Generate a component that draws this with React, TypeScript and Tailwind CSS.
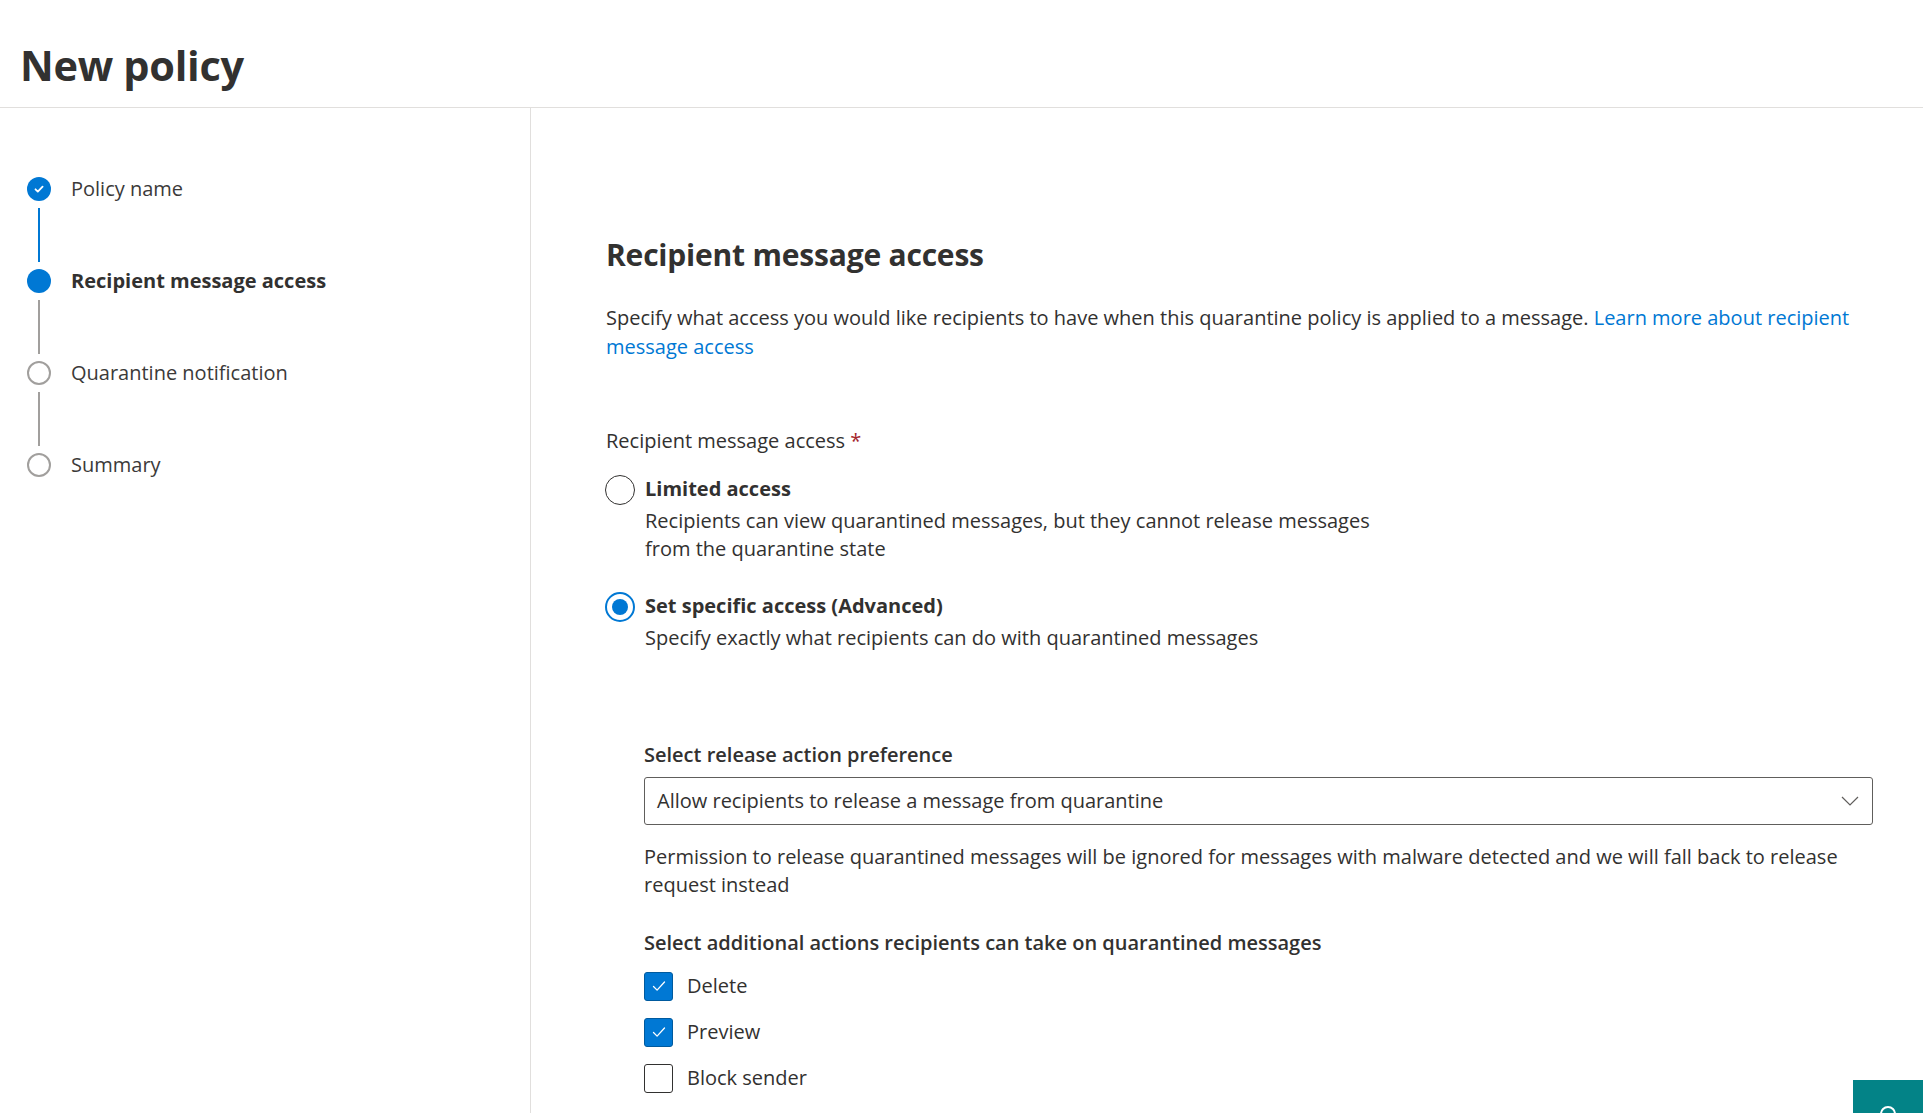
import React, { useState } from "react";

const steps = [
  { label: "Policy name", state: "done" },
  { label: "Recipient message access", state: "current" },
  { label: "Quarantine notification", state: "todo" },
  { label: "Summary", state: "todo" },
];

const StepDot = ({ state }: { state: string }) => {
  if (state === "done") {
    return (
      <span className="flex h-[24px] w-[24px] items-center justify-center rounded-full bg-[#0078d4]">
        <svg width="12" height="12" viewBox="0 0 12 12" fill="none">
          <path d="M2.5 6.3l2.3 2.3L9.6 3.6" stroke="white" strokeWidth="1.8" strokeLinecap="round" strokeLinejoin="round" />
        </svg>
      </span>
    );
  }
  if (state === "current") {
    return <span className="block h-[24px] w-[24px] rounded-full bg-[#0078d4]" />;
  }
  return <span className="block h-[24px] w-[24px] rounded-full border-2 border-[#a19f9d] bg-white" />;
};

const Radio = ({ checked }: { checked: boolean }) => (
  <span
    className={`flex h-[30px] w-[30px] shrink-0 items-center justify-center rounded-full bg-white ${
      checked ? "border-2 border-[#0078d4]" : "border-[1.5px] border-[#323130]"
    }`}
  >
    {checked && <span className="block h-[16px] w-[16px] rounded-full bg-[#0078d4]" />}
  </span>
);

const Checkbox = ({ checked }: { checked: boolean }) => (
  <span
    className={`flex h-[29px] w-[29px] shrink-0 items-center justify-center rounded-[3px] ${
      checked ? "border border-[#005a9e] bg-[#0078d4]" : "border-[1.5px] border-[#323130] bg-white"
    }`}
  >
    {checked && (
      <svg width="18" height="18" viewBox="0 0 18 18" fill="none">
        <path d="M3.5 9.5l3.6 3.6L14.5 5" stroke="white" strokeWidth="1.3" strokeLinecap="round" strokeLinejoin="round" />
      </svg>
    )}
  </span>
);

export default function App() {
  const [access, setAccess] = useState("specific");
  const [actions, setActions] = useState({ delete: true, preview: true, block: false });

  return (
    <div
      className="relative h-[1113px] overflow-hidden bg-white text-[#323130]"
      style={{ fontFamily: '"Open Sans", "Noto Sans", sans-serif' }}
    >
      {/* Header */}
      <div className="h-[108px] border-b border-[#e1dfdd] pl-[20px] pt-[39px]">
        <h1 className="text-[41.5px] font-bold leading-[52px] tracking-[-0.3px] text-[#323130]">New policy</h1>
      </div>

      <div className="flex h-[1005px]">
        {/* Steps */}
        <div className="w-[531px] shrink-0 border-r border-[#e1dfdd] pl-[27px] pt-[69px]">
          {steps.map((step, i) => (
            <div key={step.label}>
              <div className="flex h-[24px] items-center gap-[20px]">
                <StepDot state={step.state} />
                <span
                  className={`text-[20px] ${
                    step.state === "current" ? "font-bold text-[#323130]" : "text-[#3b3a39]"
                  }`}
                >
                  {step.label}
                </span>
              </div>
              {i < steps.length - 1 && (
                <div className="flex h-[68px] w-[24px] justify-center py-[7px]">
                  <span
                    className={`block w-[2px] ${
                      step.state === "done" ? "bg-[#0078d4]" : "bg-[#a19f9d]"
                    }`}
                  />
                </div>
              )}
            </div>
          ))}
        </div>

        {/* Content */}
        <div className="flex-1 pl-[75px] pr-[50px] pt-[129px] text-[20px]">
          <h2 className="text-[30px] font-bold leading-[36px] tracking-[-0.2px]">Recipient message access</h2>
          <p className="mt-[30px] leading-[29px]">
            Specify what access you would like recipients to have when this quarantine policy is applied to a
            message. <a className="text-[#0078d4]">Learn more about recipient message access</a>
          </p>

          <div className="mt-[65px] leading-[29px]">
            Recipient message access <span className="text-[#a4262c]">*</span>
          </div>

          <div className="mt-[20px] flex flex-col gap-[29px]">
            <label className="flex cursor-pointer gap-[10px]" onClick={() => setAccess("limited")}>
              <span className="-ml-[1px]">
                <Radio checked={access === "limited"} />
              </span>
              <div className="max-w-[760px] leading-[28px]">
                <div className="font-bold">Limited access</div>
                <div className="mt-[4px]">
                  Recipients can view quarantined messages, but they cannot release messages from the quarantine state
                </div>
              </div>
            </label>
            <label className="flex cursor-pointer gap-[10px]" onClick={() => setAccess("specific")}>
              <span className="-ml-[1px]">
                <Radio checked={access === "specific"} />
              </span>
              <div className="leading-[28px]">
                <div className="font-bold">Set specific access (Advanced)</div>
                <div className="mt-[4px]">Specify exactly what recipients can do with quarantined messages</div>
              </div>
            </label>
          </div>

          <div className="ml-[38px] mt-[89px]">
            <div className="font-semibold leading-[28px]">Select release action preference</div>
            <div className="mt-[8px] flex h-[48px] items-center justify-between rounded-[3px] border border-[#605e5c] pl-[12px] pr-[13px]">
              <span>Allow recipients to release a message from quarantine</span>
              <svg width="18" height="10" viewBox="0 0 18 10" fill="none">
                <path d="M1 1l8 8 8-8" stroke="#605e5c" strokeWidth="1.2" />
              </svg>
            </div>
            <p className="mt-[18px] leading-[28px]">
              Permission to release quarantined messages will be ignored for messages with malware detected and we will
              fall back to release request instead
            </p>

            <div className="mt-[30px] font-semibold leading-[28px]">
              Select additional actions recipients can take on quarantined messages
            </div>
            <div className="mt-[14px] flex flex-col gap-[16px]">
              {[
                { key: "delete", label: "Delete" },
                { key: "preview", label: "Preview" },
                { key: "block", label: "Block sender" },
              ].map((item) => (
                <label
                  key={item.key}
                  className="flex cursor-pointer items-center gap-[14px]"
                  onClick={() =>
                    setActions((prev) => ({
                      ...prev,
                      [item.key]: !prev[item.key as keyof typeof prev],
                    }))
                  }
                >
                  <Checkbox checked={actions[item.key as keyof typeof actions]} />
                  <span>{item.label}</span>
                </label>
              ))}
            </div>
          </div>
        </div>
      </div>

      {/* Help button */}
      <button className="absolute left-[1853px] top-[1080px] flex h-[70px] w-[70px] justify-center bg-[#038387] pt-[26px]">
        <span className="block h-[16px] w-[16px] rounded-full border-2 border-white" />
      </button>
    </div>
  );
}
